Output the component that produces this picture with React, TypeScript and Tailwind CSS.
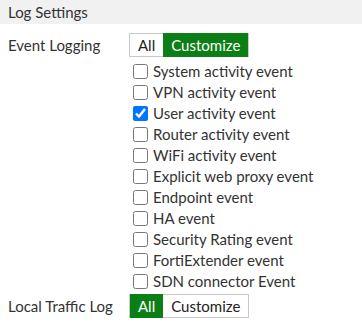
import React, { useState } from "react";

const events = [
    "System activity event",
    "VPN activity event",
    "User activity event",
    "Router activity event",
    "WiFi activity event",
    "Explicit web proxy event",
    "Endpoint event",
    "HA event",
    "Security Rating event",
    "FortiExtender event",
    "SDN connector Event",
];

function Toggle({ value, onChange }: { value: string; onChange: (v: string) => void }) {
    return (
        <div className="flex self-start h-[24px] border border-[#c8c8c8] text-[15px]">
            {["All", "Customize"].map((opt) => (
                <button
                    key={opt}
                    type="button"
                    onClick={() => onChange(opt)}
                    className={
                        value === opt
                            ? "bg-[#0b7f15] text-white px-[8px] leading-[22px] -my-px h-[24px]"
                            : "bg-white text-[#222] px-[8px] leading-[22px]"
                    }
                >
                    {opt}
                </button>
            ))}
        </div>
    );
}

export default function App() {
    const [eventMode, setEventMode] = useState("Customize");
    const [trafficMode, setTrafficMode] = useState("All");
    const [checked, setChecked] = useState<string[]>(["User activity event"]);

    const toggleEvent = (name: string) => {
        setChecked((prev) => (prev.includes(name) ? prev.filter((n) => n !== name) : [...prev, name]));
    };

    return (
        <div className="w-[362px] h-[326px] bg-white text-[#333] font-['Lato','Noto_Sans',sans-serif] text-[15px]">
            <div className="h-[24px] bg-[#f1f1f1] px-[8px] leading-[24px] text-[#333]">Log Settings</div>

            <div className="flex pt-[9px]">
                <div className="w-[129px] pl-[8px] leading-[24px]">Event Logging</div>
                <div className="flex flex-col">
                    <Toggle value={eventMode} onChange={setEventMode} />
                    {eventMode === "Customize" && (
                        <div className="flex flex-col pt-[4px]">
                            {events.map((name) => (
                                <label key={name} className="flex items-center h-[21px] pl-[4px] gap-[5px] cursor-pointer">
                                    <input
                                        type="checkbox"
                                        checked={checked.includes(name)}
                                        onChange={() => toggleEvent(name)}
                                        className="w-[15px] h-[15px] m-0"
                                    />
                                    <span>{name}</span>
                                </label>
                            ))}
                        </div>
                    )}
                </div>
            </div>

            <div className="flex pt-[2px]">
                <div className="w-[129px] pl-[8px] leading-[24px]">Local Traffic Log</div>
                <Toggle value={trafficMode} onChange={setTrafficMode} />
            </div>
        </div>
    );
}
